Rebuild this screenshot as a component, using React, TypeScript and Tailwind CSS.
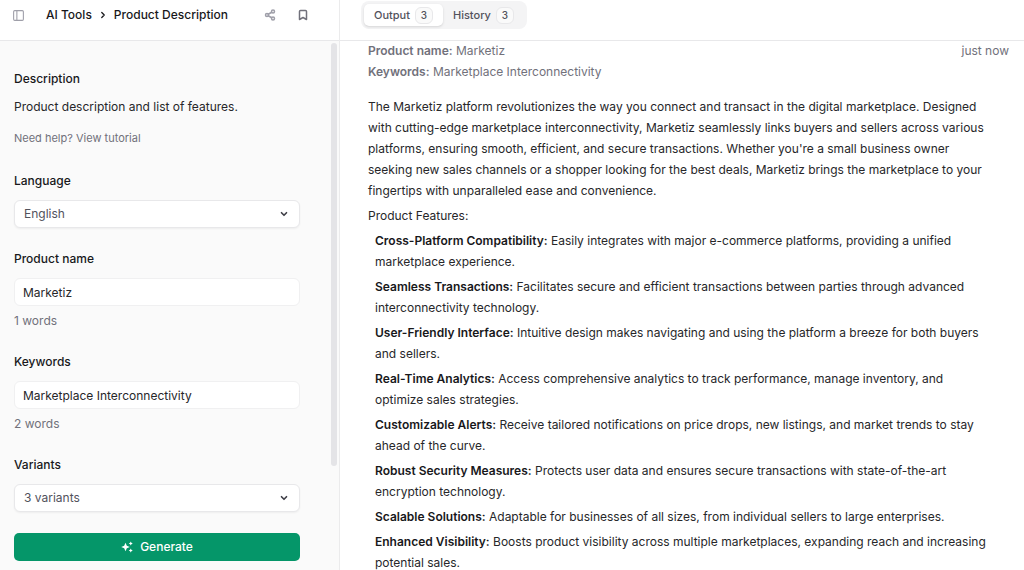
import { useState, type ReactNode } from "react";
import { Bookmark, ChevronDown, ChevronRight, PanelLeft, Share2 } from "lucide-react";

const FEATURES = [
  { title: "Cross-Platform Compatibility:", text: "Easily integrates with major e-commerce platforms, providing a unified marketplace experience." },
  { title: "Seamless Transactions:", text: "Facilitates secure and efficient transactions between parties through advanced interconnectivity technology." },
  { title: "User-Friendly Interface:", text: "Intuitive design makes navigating and using the platform a breeze for both buyers and sellers." },
  { title: "Real-Time Analytics:", text: "Access comprehensive analytics to track performance, manage inventory, and optimize sales strategies." },
  { title: "Customizable Alerts:", text: "Receive tailored notifications on price drops, new listings, and market trends to stay ahead of the curve." },
  { title: "Robust Security Measures:", text: "Protects user data and ensures secure transactions with state-of-the-art encryption technology." },
  { title: "Scalable Solutions:", text: "Adaptable for businesses of all sizes, from individual sellers to large enterprises." },
  { title: "Enhanced Visibility:", text: "Boosts product visibility across multiple marketplaces, expanding reach and increasing potential sales." },
];

function countWords(s: string) {
  return s.trim().split(/\s+/).filter(Boolean).length;
}

function Field({ id, label, children }: { id: string; label: string; children: ReactNode }) {
  return (
    <div className="flex flex-col">
      <label htmlFor={id} className="mb-[9px] text-xs leading-5 font-medium text-zinc-900">
        {label}
      </label>
      {children}
    </div>
  );
}

function SelectBox({ id, options }: { id: string; options: string[] }) {
  return (
    <div className="relative">
      <select
        id={id}
        className="h-7 w-full appearance-none rounded-md border border-[#e8e8ea] bg-white px-[9px] text-xs text-zinc-600 shadow-xs outline-none"
      >
        {options.map((o) => (
          <option key={o}>{o}</option>
        ))}
      </select>
      <ChevronDown className="pointer-events-none absolute top-[9px] right-[11px] size-[10px] text-zinc-700" strokeWidth={4} />
    </div>
  );
}

function TextBox({ id, value, onChange }: { id: string; value: string; onChange: (v: string) => void }) {
  return (
    <>
      <input
        id={id}
        value={value}
        onChange={(e) => onChange(e.target.value)}
        className="h-7 w-full rounded-md border border-[#f0f0f1] bg-white px-2 text-xs text-zinc-800 outline-none"
      />
      <span className="mt-1 text-xs leading-[21px] text-zinc-500">{countWords(value)} words</span>
    </>
  );
}

function Tab({ label, count, active, onClick }: { label: string; count: number; active: boolean; onClick: () => void }) {
  return (
    <button
      role="tab"
      aria-selected={active}
      onClick={onClick}
      className={`flex h-[22px] items-center gap-[5px] rounded-[5px] px-[10px] text-[11px] font-medium text-zinc-600 ${
        active ? "bg-white shadow-sm" : ""
      }`}
    >
      {label}
      <span className="flex h-[17px] w-[18px] items-center justify-center rounded-md border border-[#e8e8ea] bg-zinc-50 text-[10px]">
        {count}
      </span>
    </button>
  );
}

function Sparkles() {
  return (
    <svg viewBox="0 0 24 24" className="size-3" fill="currentColor" aria-hidden="true">
      <path d="M9 3.5l2.6 6 5.9 2.5-5.9 2.5-2.6 6-2.6-6L.5 12l5.9-2.5z" />
      <path d="M19.5 1l1.3 2.7 2.7 1.3-2.7 1.3-1.3 2.7-1.3-2.7-2.7-1.3 2.7-1.3zM19.5 15l1.3 2.7 2.7 1.3-2.7 1.3-1.3 2.7-1.3-2.7-2.7-1.3 2.7-1.3z" />
    </svg>
  );
}

export default function App() {
  const [name, setName] = useState("Marketiz");
  const [keywords, setKeywords] = useState("Marketplace Interconnectivity");
  const [tab, setTab] = useState("output");

  return (
    <div className="flex h-screen overflow-hidden bg-white font-['Inter',sans-serif] text-zinc-800">
      <aside className="flex w-[340px] shrink-0 flex-col border-r border-[#ebebec] bg-[#fafafa]">
        <header className="flex h-[41px] shrink-0 items-center border-b border-[#e8e8ea] bg-white px-3 pb-[10px]">
          <button aria-label="Toggle sidebar" className="text-zinc-400">
            <PanelLeft className="size-[13px]" />
          </button>
          <nav className="ml-[21px] flex items-center text-xs font-medium text-zinc-900">
            <a href="#tools">AI Tools</a>
            <ChevronRight className="mx-[6px] size-[10px]" strokeWidth={3} />
            <span>Product Description</span>
          </nav>
          <button aria-label="Share" className="ml-auto text-zinc-400">
            <Share2 className="size-3" strokeWidth={3} />
          </button>
          <button aria-label="Bookmark" className="mr-[18px] ml-[21px] text-zinc-500">
            <Bookmark className="size-3" strokeWidth={3} />
          </button>
        </header>

        <div className="flex min-h-0 flex-1">
          <form className="flex flex-1 flex-col gap-[21px] pt-7 pr-[31px] pl-[14px]" onSubmit={(e) => e.preventDefault()}>
            <div className="mb-1 flex flex-col gap-2">
              <h2 className="text-xs leading-5 font-medium text-zinc-900">Description</h2>
              <p className="text-xs leading-5">Product description and list of features.</p>
              <a href="#tutorial" className="mt-[5px] text-[11px] leading-4 text-zinc-500">
                Need help? View tutorial
              </a>
            </div>
            <Field id="language" label="Language">
              <SelectBox id="language" options={["English", "Spanish", "French"]} />
            </Field>
            <Field id="name" label="Product name">
              <TextBox id="name" value={name} onChange={setName} />
            </Field>
            <Field id="keywords" label="Keywords">
              <TextBox id="keywords" value={keywords} onChange={setKeywords} />
            </Field>
            <Field id="variants" label="Variants">
              <SelectBox id="variants" options={["3 variants", "2 variants", "1 variant"]} />
            </Field>
            <button className="flex h-7 shrink-0 items-center justify-center gap-[7px] rounded-[5px] bg-[#059669] text-xs font-medium text-white">
              <Sparkles />
              Generate
            </button>
          </form>
          <div className="mt-[2px] mr-[2px] h-[80%] w-[6px] rounded-full bg-zinc-200" />
        </div>
      </aside>

      <main className="flex min-w-0 flex-1 flex-col">
        <header className="h-[41px] shrink-0 border-b border-[#e8e8ea] px-[21px] pt-[1px]">
          <div role="tablist" className="flex h-7 w-fit items-center rounded-lg bg-zinc-100 px-[3px]">
            <Tab label="Output" count={3} active={tab === "output"} onClick={() => setTab("output")} />
            <Tab label="History" count={3} active={tab === "history"} onClick={() => setTab("history")} />
          </div>
        </header>

        <article className="min-h-0 flex-1 overflow-hidden pr-[15px] pl-7 text-xs leading-[21px]">
          <div className="flex justify-between leading-5 text-zinc-500">
            <div className="flex flex-col gap-[1px]">
              <p>
                <strong className="font-semibold">Product name:</strong> {name}
              </p>
              <p>
                <strong className="font-semibold">Keywords:</strong> {keywords}
              </p>
            </div>
            <time>just now</time>
          </div>
          <div className="mt-[14px] max-w-[622px]">
            <p>
              The Marketiz platform revolutionizes the way you connect and transact in the digital marketplace. Designed
              with cutting-edge marketplace interconnectivity, Marketiz seamlessly links buyers and sellers across
              various platforms, ensuring smooth, efficient, and secure transactions. Whether you're a small business
              owner seeking new sales channels or a shopper looking for the best deals, Marketiz brings the marketplace
              to your fingertips with unparalleled ease and convenience.
            </p>
            <p className="mt-1">Product Features:</p>
            <ul className="mt-1 flex flex-col gap-1 pl-[7px]">
              {FEATURES.map((f) => (
                <li key={f.title}>
                  <strong className="font-semibold text-zinc-900">{f.title}</strong> {f.text}
                </li>
              ))}
            </ul>
          </div>
        </article>
      </main>
    </div>
  );
}
